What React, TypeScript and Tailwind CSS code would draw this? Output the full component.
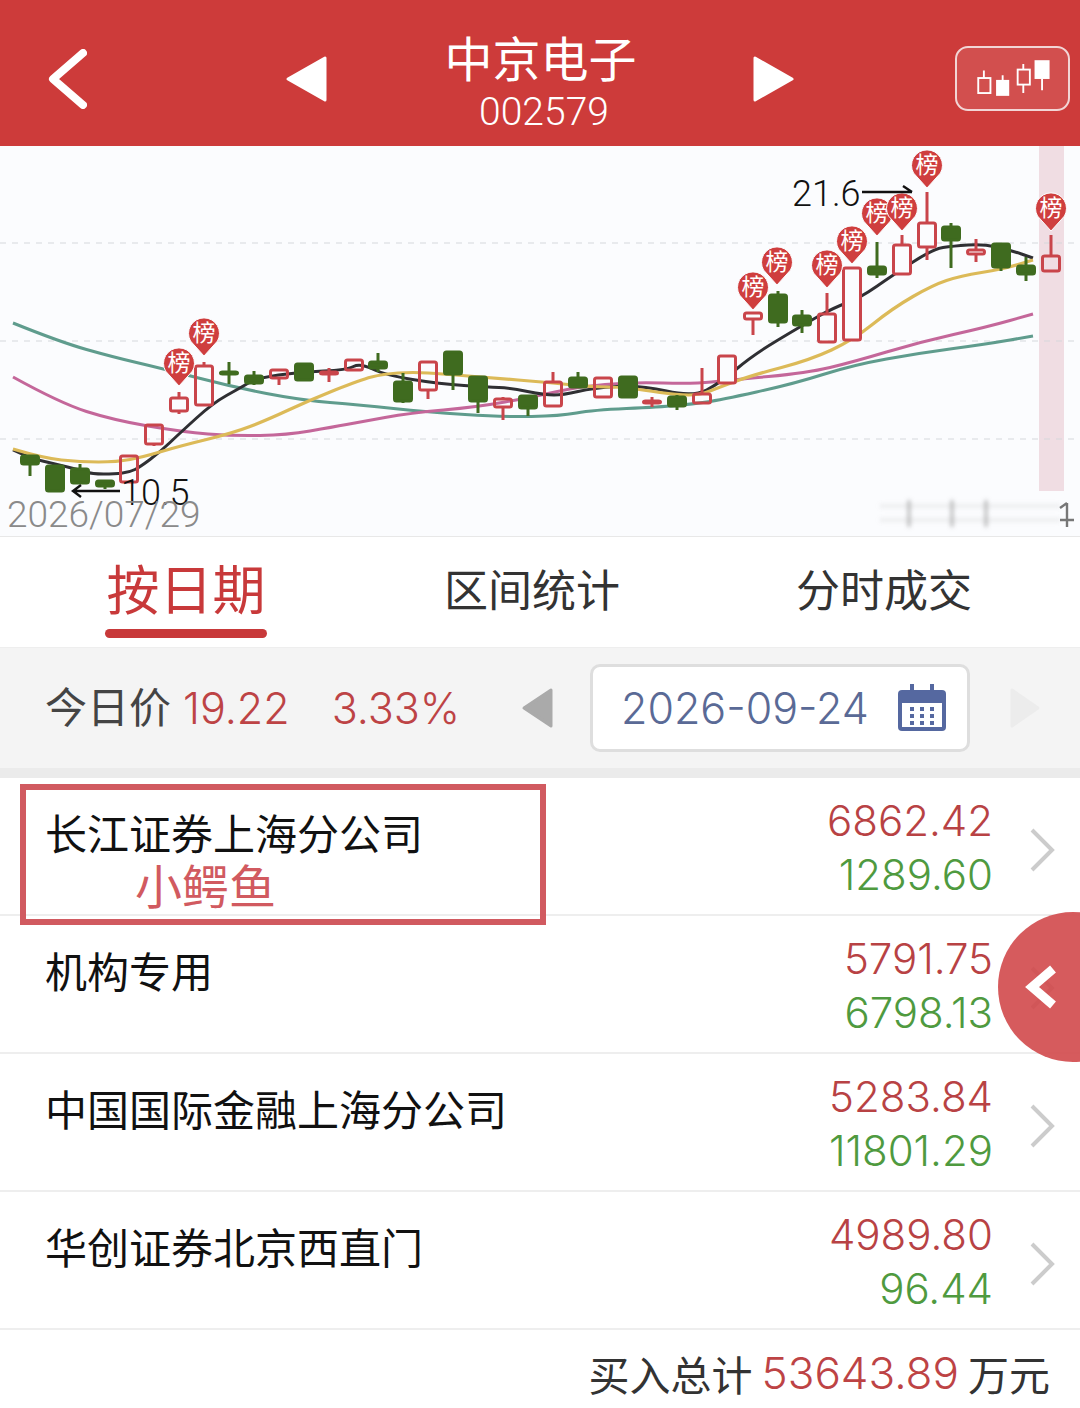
import React from 'react';

type Candle = { x: number; top: number; bottom: number; hi?: number; lo?: number; up: boolean; solid?: boolean };
type Point = [number, number];

const CANDLES: Candle[] = [
  { x: 30, top: 456, bottom: 464, lo: 476, up: false },
  { x: 55, top: 466, bottom: 491, up: false },
  { x: 80, top: 469, bottom: 483, hi: 464, up: false },
  { x: 105, top: 481, bottom: 486, hi: 480, lo: 489, up: false },
  { x: 129, top: 456, bottom: 482, up: true },
  { x: 154, top: 425, bottom: 444, lo: 446, up: true },
  { x: 179, top: 398, bottom: 411, hi: 392, lo: 414, up: true },
  { x: 204, top: 366, bottom: 405, hi: 362, up: true },
  { x: 229, top: 372, bottom: 374, hi: 362, lo: 384, up: false },
  { x: 254, top: 376, bottom: 383, hi: 371, lo: 385, up: false },
  { x: 279, top: 370, bottom: 378, lo: 385, up: true },
  { x: 304, top: 364, bottom: 380, up: false },
  { x: 329, top: 372, bottom: 374, hi: 368, lo: 382, up: true },
  { x: 354, top: 360, bottom: 370, up: true },
  { x: 378, top: 362, bottom: 368, hi: 353, lo: 372, up: false },
  { x: 403, top: 382, bottom: 401, hi: 373, lo: 403, up: false },
  { x: 428, top: 362, bottom: 390, lo: 399, up: true },
  { x: 453, top: 352, bottom: 374, lo: 390, up: false },
  { x: 478, top: 377, bottom: 401, lo: 413, up: false },
  { x: 503, top: 399, bottom: 407, hi: 397, lo: 420, up: true },
  { x: 528, top: 396, bottom: 408, lo: 416, up: false },
  { x: 553, top: 382, bottom: 406, hi: 372, up: true },
  { x: 578, top: 378, bottom: 387, hi: 372, up: false },
  { x: 603, top: 378, bottom: 397, up: true },
  { x: 628, top: 377, bottom: 397, up: false },
  { x: 652, top: 401, bottom: 403, hi: 397, lo: 407, up: true },
  { x: 677, top: 397, bottom: 406, hi: 395, lo: 410, up: false },
  { x: 702, top: 394, bottom: 403, hi: 368, up: true },
  { x: 727, top: 356, bottom: 383, up: true, solid: true },
  { x: 753, top: 313, bottom: 319, lo: 335, up: true },
  { x: 778, top: 295, bottom: 322, hi: 291, lo: 327, up: false },
  { x: 802, top: 316, bottom: 325, hi: 310, lo: 333, up: false },
  { x: 827, top: 314, bottom: 342, hi: 293, up: true },
  { x: 852, top: 268, bottom: 340, up: true, solid: true },
  { x: 877, top: 267, bottom: 274, hi: 242, lo: 278, up: false },
  { x: 902, top: 245, bottom: 274, hi: 235, up: true, solid: true },
  { x: 927, top: 223, bottom: 247, hi: 192, lo: 260, up: true, solid: true },
  { x: 951, top: 227, bottom: 240, hi: 223, lo: 268, up: false },
  { x: 976, top: 250, bottom: 254, hi: 239, lo: 262, up: true },
  { x: 1001, top: 244, bottom: 267, lo: 271, up: false },
  { x: 1026, top: 266, bottom: 274, hi: 257, lo: 281, up: false },
  { x: 1051, top: 256, bottom: 271, hi: 235, up: true },
];

const MA_BLACK: Point[] = [[13, 450], [30, 458], [55, 464], [80, 470], [92, 474], [115, 474], [130, 472], [140, 467], [160, 452], [180, 433], [213, 403], [240, 388], [257, 378], [300, 372], [347, 370], [360, 363], [385, 375], [440, 384], [488, 387], [510, 388], [545, 395], [563, 395], [593, 388], [640, 385], [693, 397], [720, 383], [753, 355], [803, 325], [833, 308], [860, 298], [893, 275], [933, 249], [953, 246], [983, 244], [1010, 250], [1033, 258]];
const MA_YELLOW: Point[] = [[13, 449], [43, 458], [80, 462], [117, 462], [143, 457], [180, 446], [233, 433], [267, 420], [310, 400], [360, 380], [383, 374], [413, 372], [443, 374], [493, 378], [543, 382], [593, 387], [620, 387], [643, 390], [677, 395], [700, 395], [720, 387], [753, 375], [810, 360], [853, 340], [893, 308], [933, 285], [960, 276], [1003, 269], [1033, 260]];
const MA_PINK: Point[] = [[13, 377], [60, 403], [113, 420], [183, 432], [233, 436], [287, 435], [333, 427], [360, 422], [410, 413], [477, 407], [533, 397], [577, 387], [633, 382], [693, 384], [730, 380], [807, 373], [853, 362], [920, 342], [987, 327], [1033, 314]];
const MA_TEAL: Point[] = [[13, 323], [60, 342], [113, 357], [160, 368], [233, 387], [300, 400], [360, 405], [427, 412], [503, 417], [560, 416], [593, 410], [660, 407], [693, 404], [720, 400], [793, 384], [853, 365], [920, 353], [987, 344], [1033, 336]];

const PINS: Point[] = [[179, 363], [204, 333], [753, 287], [777, 262], [827, 265], [852, 241], [877, 213], [902, 208], [927, 165], [1051, 208]];

const ROWS = [
  { name: '长江证券上海分公司', buy: '6862.42', sell: '1289.60' },
  { name: '机构专用', buy: '5791.75', sell: '6798.13' },
  { name: '中国国际金融上海分公司', buy: '5283.84', sell: '11801.29' },
  { name: '华创证券北京西直门', buy: '4989.80', sell: '96.44' },
];

// midpoints smooth the hand-read chart points without overshoot
function smooth(points: Point[]) {
  let d = `M${points[0][0]} ${points[0][1]}`;
  for (let i = 1; i < points.length - 1; i++) {
    const mx = (points[i][0] + points[i + 1][0]) / 2;
    const my = (points[i][1] + points[i + 1][1]) / 2;
    d += ` Q${points[i][0]} ${points[i][1]} ${mx} ${my}`;
  }
  const last = points[points.length - 1];
  return `${d} L${last[0]} ${last[1]}`;
}

function KChart() {
  return (
    <svg viewBox="0 146 1080 390" className="block w-[1080px] h-[390px]">
      <defs>
        <filter id="smear" x="-20%" y="-20%" width="140%" height="140%">
          <feGaussianBlur stdDeviation="2.2" />
        </filter>
      </defs>
      <rect x="1039" y="146" width="25" height="345" fill="#f0dde3" />
      {[243, 341, 439].map(y => (
        <line key={y} x1="0" x2="1076" y1={y} y2={y} stroke="#d6d8dc" strokeWidth="1.2" strokeDasharray="6 6" />
      ))}
      <path d={smooth(MA_TEAL)} fill="none" stroke="#5f9c8d" strokeWidth="3" />
      <path d={smooth(MA_PINK)} fill="none" stroke="#c4679a" strokeWidth="3" />
      <path d={smooth(MA_BLACK)} fill="none" stroke="#2f2f33" strokeWidth="3" />
      <path d={smooth(MA_YELLOW)} fill="none" stroke="#dcba58" strokeWidth="3.2" />
      {CANDLES.map(c => {
        const color = c.up ? '#c9454b' : '#3f6b1f';
        return (
          <g key={c.x}>
            {c.hi !== undefined && <line x1={c.x} x2={c.x} y1={c.hi} y2={c.top} stroke={color} strokeWidth="3" />}
            {c.lo !== undefined && <line x1={c.x} x2={c.x} y1={c.bottom} y2={c.lo} stroke={color} strokeWidth="3" />}
            <rect
              x={c.x - 8.5}
              y={c.top}
              width="17"
              height={c.bottom - c.top}
              rx="2"
              fill={c.up ? (c.solid ? '#fbfcfe' : 'none') : color}
              stroke={color}
              strokeWidth="3"
            />
          </g>
        );
      })}
      {PINS.map(([x, y]) => (
        <g key={`${x}-${y}`}>
          <path
            d={`M${x} ${y + 23} L${x - 13.5} ${y + 8} A15.5 15.5 0 1 1 ${x + 13.5} ${y + 8} Z`}
            fill="#cf3e3e"
            stroke="#fbfcfe"
            strokeWidth="1"
          />
          <text x={x} y={y + 8} textAnchor="middle" fontSize="23" fill="#ffffff" className="font-['Noto_Sans_CJK_SC',sans-serif]">榜</text>
        </g>
      ))}
      <text x="792" y="206" fontSize="36" fill="#111111" className="font-['Roboto',sans-serif] font-light">21.6</text>
      <path d="M862 192 H912 M903 186 L912 192" fill="none" stroke="#111111" strokeWidth="2.4" />
      <text x="121" y="505" fontSize="36" fill="#111111" className="font-['Roboto',sans-serif] font-light">10.5</text>
      <path d="M120 491 H73 M81 485 L73 491 L81 497" fill="none" stroke="#111111" strokeWidth="2.4" />
      <text x="7" y="527" fontSize="37" fill="#8a8a8a" className="font-['Roboto',sans-serif] font-light">2026/07/29</text>
      <g filter="url(#smear)" stroke="#9a9a9a">
        <line x1="909" x2="909" y1="500" y2="527" strokeWidth="3" opacity="0.7" />
        <line x1="952" x2="952" y1="500" y2="527" strokeWidth="3" opacity="0.7" />
        <line x1="986" x2="986" y1="500" y2="527" strokeWidth="3" opacity="0.7" />
        <line x1="880" x2="1060" y1="506" y2="506" strokeWidth="4" opacity="0.16" />
        <line x1="880" x2="1060" y1="520" y2="520" strokeWidth="4" opacity="0.16" />
      </g>
      <path d="M1067 503 V527 M1060 520 H1074 M1060 508 L1067 503" fill="none" stroke="#777777" strokeWidth="2.4" />
    </svg>
  );
}

function Header() {
  return (
    <div className="flex items-center h-[146px] pt-[11px] bg-[#cd3b3a] text-white">
      <svg viewBox="0 0 40 60" className="ml-[47px] w-[40px] h-[60px]">
        <path d="M36 4 L6 30 L36 56" fill="none" stroke="#ffffff" strokeWidth="8" strokeLinecap="round" strokeLinejoin="round" />
      </svg>
      <svg viewBox="0 0 43 48" className="ml-[198px] w-[43px] h-[48px]">
        <path d="M40 3 V45 L3 24 Z" fill="#ffffff" stroke="#ffffff" strokeWidth="3" strokeLinejoin="round" />
      </svg>
      <div className="flex flex-col items-center w-[424px] mt-[5px]">
        <div className="text-[48px] leading-[56px] pl-[1px]">中京电子</div>
        <div className="text-[39px] leading-[46px] mt-[5px] pl-[8px] font-['Roboto',sans-serif] font-light">002579</div>
      </div>
      <svg viewBox="0 0 43 48" className="w-[43px] h-[48px]">
        <path d="M3 3 V45 L40 24 Z" fill="#ffffff" stroke="#ffffff" strokeWidth="3" strokeLinejoin="round" />
      </svg>
      <div className="ml-[160px] w-[115px] h-[65px] rounded-[13px] border-2 border-[#f2d5d5] bg-white/10">
        <svg viewBox="955 46 115 65" className="block w-full h-full">
          <path d="M982 70 V78 M1002 75 V80 M1024 63 V69 M1024 85 V94 M1044 79 V91" stroke="#ffffff" strokeWidth="2" fill="none" />
          <rect x="976" y="78" width="13" height="16" fill="none" stroke="#ffffff" strokeWidth="2" />
          <rect x="995" y="80" width="14" height="17" fill="#ffffff" />
          <rect x="1018" y="69" width="13" height="16" fill="none" stroke="#ffffff" strokeWidth="2" />
          <rect x="1036" y="59" width="16" height="20" fill="#ffffff" />
        </svg>
      </div>
    </div>
  );
}

function Tabs() {
  return (
    <div className="flex h-[110px] bg-white text-[#333333]">
      <div className="flex flex-col items-center w-[372px] pt-[19px]">
        <div className="text-[53px] leading-[62px] text-[#c8393a]">按日期</div>
        <div className="mt-[11px] w-[162px] h-[9px] rounded-full bg-[#c8393a]" />
      </div>
      <div className="w-[320px] pt-[20px] text-center text-[44px] leading-[62px]">区间统计</div>
      <div className="w-[384px] pt-[20px] text-center text-[44px] leading-[62px]">分时成交</div>
    </div>
  );
}

function DateBar() {
  return (
    <div className="flex items-center h-[120px] bg-[#f4f4f4] pl-[45px]">
      <div className="flex items-center w-[476px]">
        <span className="text-[42px] leading-[50px] mt-[-6px] text-[#444444]">今日价</span>
        <span className="ml-[12px] text-[43px] font-['Inter',sans-serif] font-light text-[#bd4345]">19.22</span>
        <span className="ml-[42px] text-[43px] font-['Inter',sans-serif] font-light text-[#bd4345]">3.33%</span>
      </div>
      <svg viewBox="0 0 32 42" className="w-[32px] h-[42px]">
        <path d="M30 3 V39 L3 21 Z" fill="#aaaaaa" stroke="#aaaaaa" strokeWidth="3" strokeLinejoin="round" />
      </svg>
      <div className="ml-[37px] flex items-center w-[380px] h-[88px] rounded-[10px] border-[3px] border-[#dedede] bg-white pl-[28px]">
        <span className="w-[276px] text-[43px] font-['Inter',sans-serif] font-light text-[#5a6a96]">2026-09-24</span>
        <svg viewBox="0 0 50 48" className="w-[50px] h-[48px]">
          <rect x="1" y="6" width="48" height="41" rx="4" fill="#5568a0" />
          <rect x="5" y="19" width="40" height="24" fill="#ffffff" />
          <path d="M15 0 V12 M35 0 V12" stroke="#5568a0" strokeWidth="4" />
          {[13, 23, 33].map(x =>
            [23, 30, 37].map(y => <rect key={`${x}-${y}`} x={x} y={y} width="4" height="4" fill="#5568a0" />),
          )}
        </svg>
      </div>
      <svg viewBox="0 0 32 42" className="ml-[39px] w-[32px] h-[42px]">
        <path d="M3 3 V39 L29 21 Z" fill="#ececec" stroke="#ececec" strokeWidth="3" strokeLinejoin="round" />
      </svg>
    </div>
  );
}

function SeatRow({ name, buy, sell }: { name: string; buy: string; sell: string }) {
  return (
    <div className="flex items-start h-[138px] border-b-2 border-[#eeeeee] bg-white pl-[45px]">
      <div className="flex-1 pt-[28px] text-[42px] leading-[52px] text-[#111111]">{name}</div>
      <div className="flex flex-col items-end pt-[16px] text-[42px] leading-[54px] font-['Inter',sans-serif] font-light">
        <span className="text-[#b84244]">{buy}</span>
        <span className="text-[#4f9a3f]">{sell}</span>
      </div>
      <svg viewBox="0 0 26 46" className="ml-[36px] mr-[25px] mt-[49px] w-[26px] h-[46px]">
        <path d="M3 3 L23 23 L3 43" fill="none" stroke="#cccccc" strokeWidth="4" />
      </svg>
    </div>
  );
}

export default function App() {
  return (
    <div className="relative w-[1080px] h-[1408px] overflow-hidden bg-white font-['Noto_Sans_CJK_SC',sans-serif]">
      <Header />
      <div className="h-[391px] bg-[#fbfcfe] border-b border-[#e8e8e8]">
        <KChart />
      </div>
      <Tabs />
      <div className="h-[1px] bg-[#eeeeee]" />
      <DateBar />
      <div className="h-[10px] bg-[#ebebeb]" />
      {ROWS.map(r => (
        <SeatRow key={r.name} {...r} />
      ))}
      <div className="flex items-center justify-end h-[78px] pr-[30px] bg-white pt-[8px]">
        <span className="text-[41px] leading-[50px] text-[#333333]">买入总计</span>
        <span className="ml-[9px] text-[44px] leading-[50px] font-['Inter',sans-serif] font-light text-[#bd4345]">53643.89</span>
        <span className="ml-[9px] text-[41px] leading-[50px] text-[#333333]">万元</span>
      </div>

      {/* hand-drawn note over the first row */}
      <div className="absolute left-[20px] top-[784px] flex items-end w-[526px] h-[141px] border-[6px] border-[#d15a60] pl-[109px] pb-[11px]">
        <span className="text-[47px] leading-[48px] text-[#d15a60]">小鳄鱼</span>
      </div>

      {/* floating drawer handle */}
      <div className="absolute left-[998px] top-[912px] flex items-center w-[150px] h-[150px] rounded-full bg-[#d1494b]/90 pl-[26px]">
        <svg viewBox="0 0 34 46" className="w-[34px] h-[46px]">
          <path d="M29 5 L8 23 L29 41" fill="none" stroke="#ffffff" strokeWidth="9" />
        </svg>
      </div>
    </div>
  );
}
